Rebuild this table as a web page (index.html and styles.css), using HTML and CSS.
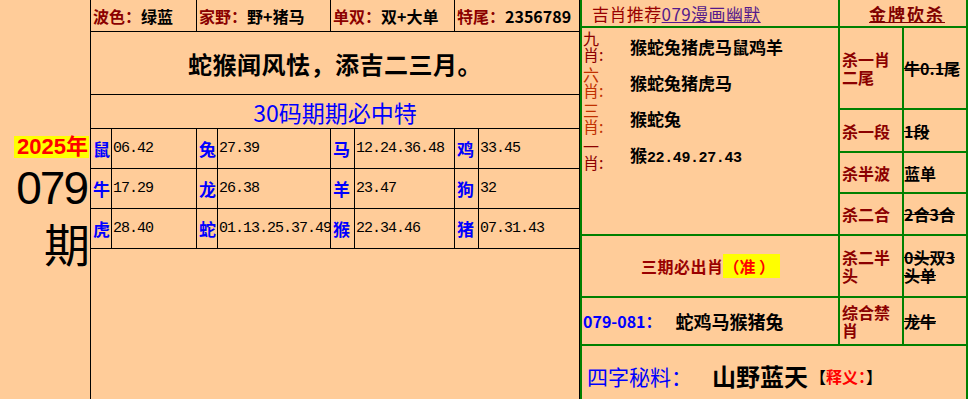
FILE: index.html
```html
<!DOCTYPE html>
<html lang="zh">
<head>
<meta charset="utf-8">
<title>079期</title>
<link rel="stylesheet" href="styles.css">
</head>
<body>
<div class="page">
  <div class="issue">
    <div class="year">2025年</div>
    <div class="num">079</div>
    <div class="qi">期</div>
  </div>

  <div class="main">
    <div class="hd wide"><span class="k">波色：</span>绿蓝</div>
    <div class="hd wide"><span class="k">家野：</span>野+猪马</div>
    <div class="hd wide"><span class="k">单双：</span>双+大单</div>
    <div class="hd wide"><span class="k">特尾：</span>2356789</div>
    <div class="poem full">蛇猴闻风怯，添吉二三月。</div>
    <div class="title full">30码期期必中特</div>

    <div class="z">鼠</div><div class="n">06.42</div>
    <div class="z">兔</div><div class="n">27.39</div>
    <div class="z">马</div><div class="n">12.24.36.48</div>
    <div class="z">鸡</div><div class="n">33.45</div>

    <div class="z">牛</div><div class="n">17.29</div>
    <div class="z">龙</div><div class="n">26.38</div>
    <div class="z">羊</div><div class="n">23.47</div>
    <div class="z">狗</div><div class="n">32</div>

    <div class="z">虎</div><div class="n">28.40</div>
    <div class="z">蛇</div><div class="n">01.13.25.37.49</div>
    <div class="z">猴</div><div class="n">22.34.46</div>
    <div class="z">猪</div><div class="n">07.31.43</div>

    <div class="blank full"></div>
  </div>

  <div class="side">
    <div class="s-head">吉肖推荐<span class="link">079漫画幽默</span></div>
    <div class="s-gold"><span>金牌砍杀</span></div>

    <div class="picks">
      <div class="pl c1">九肖:</div><div class="pv">猴蛇兔猪虎马鼠鸡羊</div>
      <div class="pl c2">六肖:</div><div class="pv">猴蛇兔猪虎马</div>
      <div class="pl c2">三肖:</div><div class="pv">猴蛇兔</div>
      <div class="pl c1">一肖:</div><div class="pv">猴<span class="mono">22.49.27.43</span></div>
    </div>

    <div class="kl">杀一肖二尾</div><div class="kv strike">牛0.1尾</div>
    <div class="kl">杀一段</div><div class="kv strike">1段</div>
    <div class="kl">杀半波</div><div class="kv">蓝单</div>
    <div class="kl">杀二合</div><div class="kv strike">2合3合</div>

    <div class="three">三期必出肖<span class="hl">（准&nbsp;）</span></div>
    <div class="kl">杀二半头</div><div class="kv strike">0头双3头单</div>

    <div class="range"><span class="rn">079-081：</span><span class="rz">蛇鸡马猴猪兔</span></div>
    <div class="kl">综合禁肖</div><div class="kv strike">龙牛</div>

    <div class="secret"><span class="sk">四字秘料：</span><span class="sv">山野蓝天</span><span class="sn">【<em>释义：</em>】</span></div>
  </div>
</div>
</body>
</html>
```

FILE: styles.css
```css
html, body {
  margin: 0;
  padding: 0;
  background: #FFCC99;
}
body {
  font-family: "Noto Sans CJK SC", "Noto Sans", sans-serif;
  color: #000;
}
.page {
  display: flex;
  width: 968px;
  height: 399px;
  overflow: hidden;
  background: #FFCC99;
}

/* left issue column */
.issue {
  width: 90px;
  flex: none;
  display: flex;
  flex-direction: column;
  align-items: flex-end;
}
.year {
  margin-top: 136px;
  margin-right: 1px;
  height: 22px;
  line-height: 22px;
  padding: 0 1px 0 3px;
  background: #FFFF00;
  color: #FF0000;
  font-weight: bold;
  font-size: 22px;
  font-family: "Liberation Sans", "Noto Sans CJK SC", sans-serif;
}
.num {
  margin-top: 7px;
  margin-right: 3px;
  font-family: "Liberation Sans", sans-serif;
  font-size: 46px;
  line-height: 46px;
  letter-spacing: -2px;
}
.qi {
  margin-top: 8px;
  font-size: 46px;
  line-height: 46px;
}

/* main black-lined table */
.main {
  flex: none;
  box-sizing: border-box;
  width: 490px;
  height: 399px;
  padding: 0 1px;
  background: #000;
  display: grid;
  grid-template-columns: 20px 84px 20px 112px 23px 99px 23px 100px;
  grid-template-rows: 31px 62px 33px 39px 39px 39px 1fr;
  gap: 1px;
}
.main > div {
  background: #FFCC99;
  display: flex;
  align-items: center;
  min-width: 0;
}
.wide { grid-column: span 2; }
.full { grid-column: 1 / -1; }
.hd {
  padding-left: 2px;
  font-size: 16px;
  font-weight: bold;
  white-space: nowrap;
}
.hd .k { color: #8B0000; }
.poem {
  justify-content: center;
  font-size: 24px;
  font-weight: bold;
  letter-spacing: 0.5px;
}
.title {
  justify-content: center;
  color: #0000FF;
  font-size: 23px;
}
.z {
  padding-left: 2px;
  color: #0000FF;
  font-weight: bold;
  font-size: 17px;
}
.n {
  padding-left: 1px;
  font-family: "Liberation Mono", monospace;
  font-size: 15px;
  letter-spacing: -1px;
  white-space: nowrap;
}

/* right green-lined panel */
.side {
  flex: none;
  box-sizing: border-box;
  width: 388px;
  height: 399px;
  padding: 0 2px;
  background: #008000;
  display: grid;
  grid-template-columns: 256px 62px 62px;
  grid-template-rows: 26px 80px 41px 39px 40px 60px 46px 1fr;
  gap: 2px;
}
.side > div {
  background: #FFCC99;
  display: flex;
  align-items: center;
  min-width: 0;
}
.s-head {
  padding-left: 10px;
  color: #990000;
  font-size: 17px;
  letter-spacing: 0.4px;
  white-space: nowrap;
}
.s-head .link {
  color: #551A8B;
  text-decoration: underline;
}
.s-gold {
  grid-column: 2 / 4;
  justify-content: center;
  padding-left: 8px;
}
.s-gold span {
  color: #800000;
  font-weight: bold;
  font-size: 17px;
  letter-spacing: 2px;
  text-decoration: underline;
}
.picks {
  grid-column: 1;
  grid-row: 2 / 6;
  display: grid !important;
  grid-template-columns: 24px 1fr;
  grid-template-rows: repeat(4, 36px);
  align-content: start;
  padding-left: 1px;
}
.pl {
  font-size: 16px;
  line-height: 16px;
  width: 24px;
  align-self: center;
}
.c1 { color: #8B0000; }
.c2 { color: #C03000; }
.pv {
  align-self: center;
  padding-left: 23px;
  font-size: 17px;
  font-weight: bold;
  white-space: nowrap;
}
.mono {
  font-family: "Liberation Mono", monospace;
  font-size: 15px;
  font-weight: bold;
  letter-spacing: -0.4px;
}
.kl {
  padding-left: 2px;
  color: #8B0000;
  font-size: 16px;
  line-height: 18px;
  font-weight: bold;
}
.kv {
  font-size: 16px;
  line-height: 18px;
  font-weight: bold;
}
.strike { text-decoration: line-through; }
.three {
  justify-content: center;
  padding-left: 1px;
  color: #990000;
  font-size: 16px;
  font-weight: bold;
  letter-spacing: 0.5px;
}
.three .hl {
  background: #FFFF00;
  color: #FF0000;
  padding-right: 5px;
  letter-spacing: 0;
}
.range {
  padding-left: 1px;
}
.rn {
  color: #0000FF;
  font-weight: bold;
  font-size: 16px;
  white-space: nowrap;
}
.rz {
  margin-left: 14px;
  font-size: 18px;
  font-weight: bold;
  white-space: nowrap;
}
.secret {
  grid-column: 1 / -1;
  padding: 6px 0 0 5px;
  box-sizing: border-box;
}
.sk {
  color: #0000FF;
  font-size: 21px;
  white-space: nowrap;
}
.sv {
  margin-left: 20px;
  font-size: 24px;
  font-weight: bold;
  white-space: nowrap;
}
.sn {
  margin-left: 2px;
  font-size: 16px;
  font-weight: bold;
  white-space: nowrap;
}
.sn em {
  font-style: normal;
  color: #FF0000;
}
```
